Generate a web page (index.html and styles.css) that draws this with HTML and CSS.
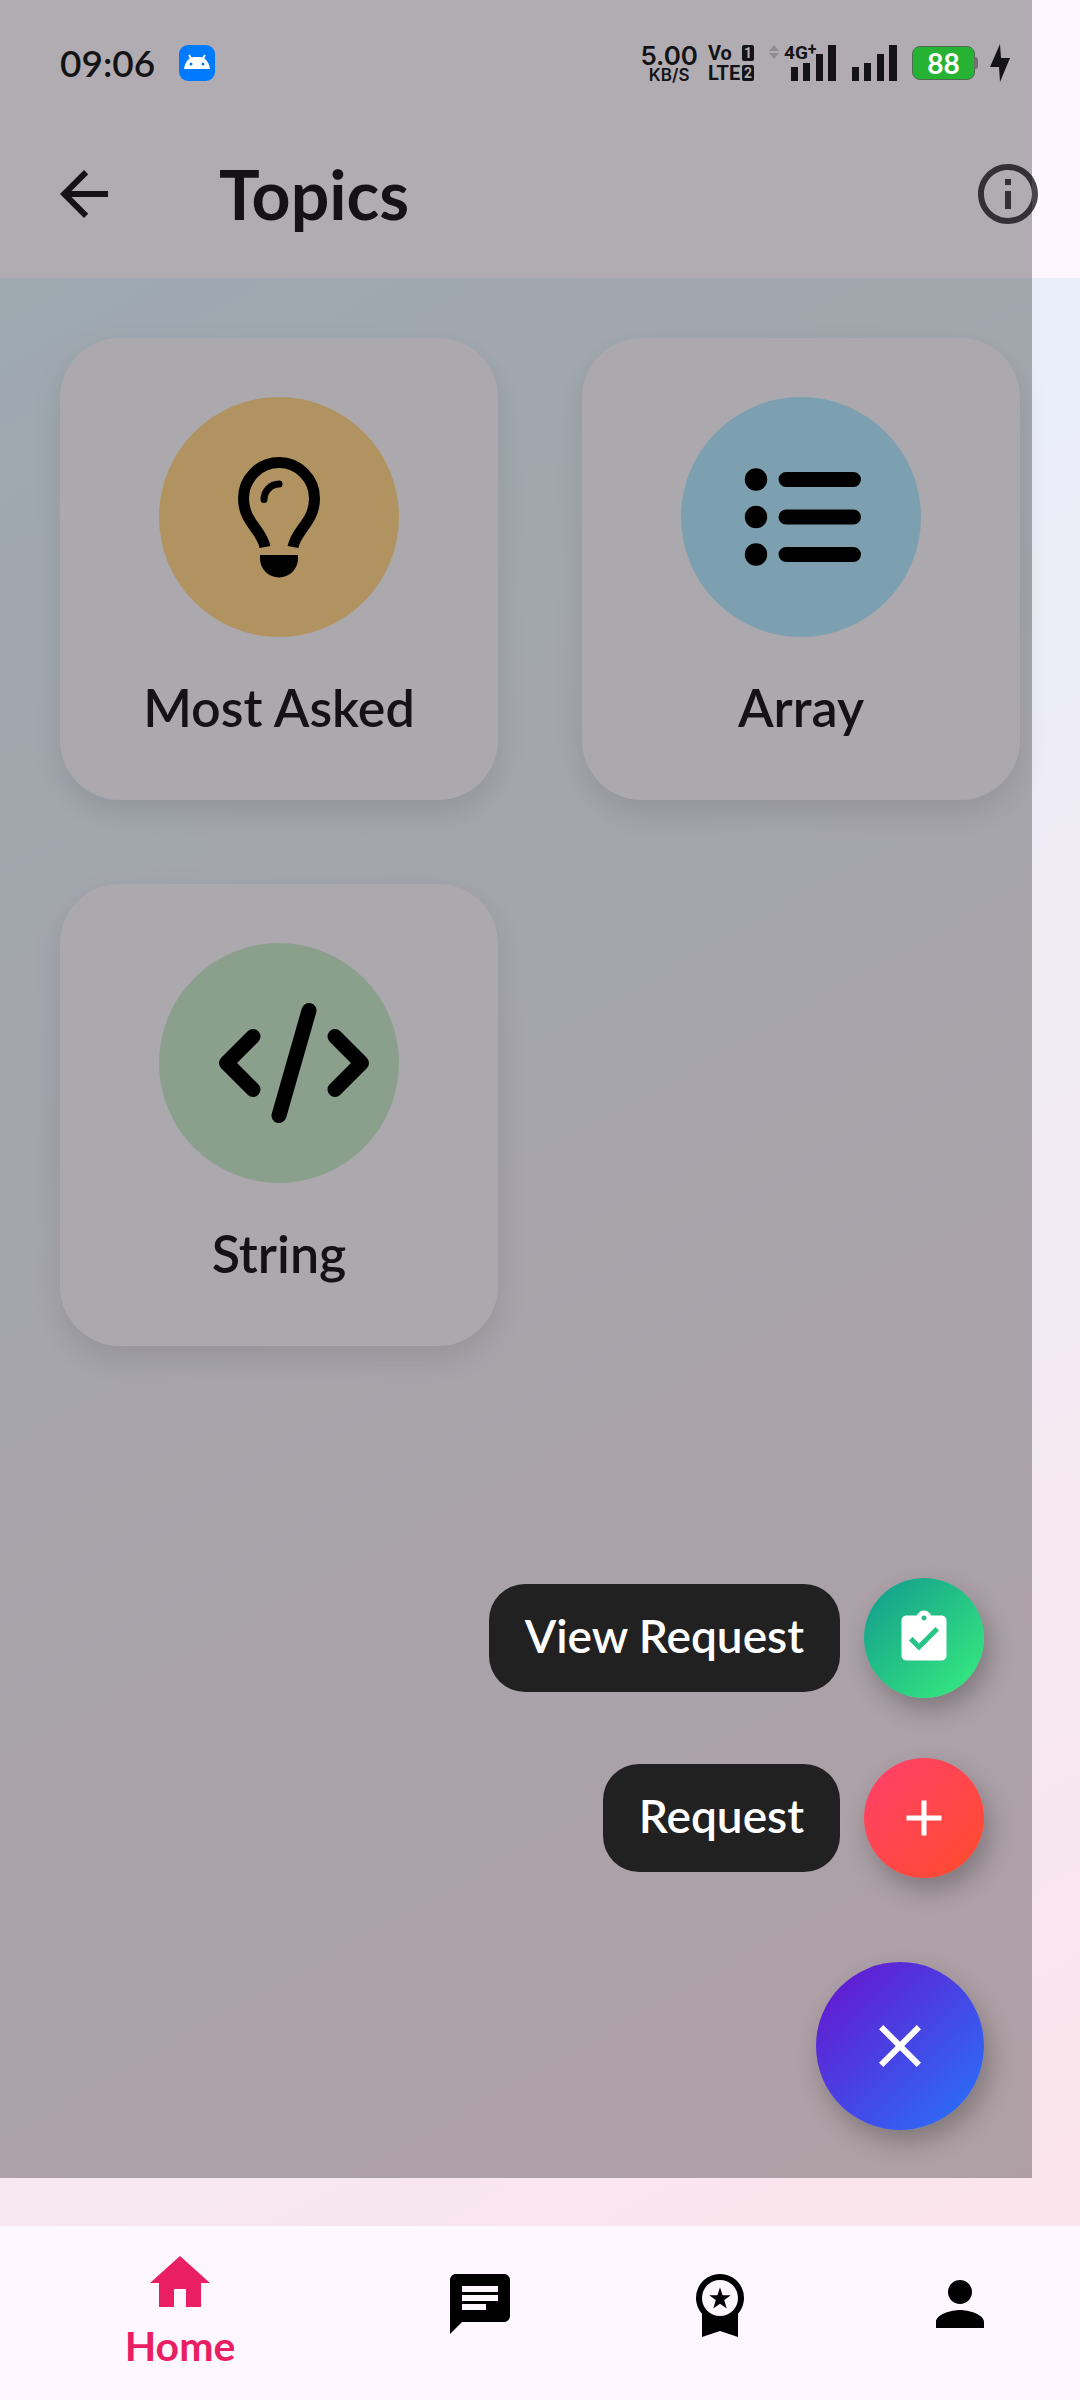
FILE: index.html
```html
<!DOCTYPE html>
<html lang="en">
<head>
<meta charset="utf-8">
<meta name="viewport" content="width=device-width, initial-scale=1">
<title>Topics</title>
<link rel="stylesheet" href="styles.css">
</head>
<body>
<div class="screen">
  <div class="status">
    <span class="clock">09:06</span>
    <svg class="droid" viewBox="0 0 36 36" aria-hidden="true">
      <rect width="36" height="36" rx="9" fill="#007aff"/>
      <path d="M10 10l3 5M26 10l-3 5" stroke="#fff" stroke-width="2"/>
      <path d="M5 24c1-8 6-12 10-12h6c4 0 9 4 10 12z" fill="#fff"/>
      <circle cx="12" cy="19" r="1.5" fill="#007aff"/><circle cx="24" cy="19" r="1.5" fill="#007aff"/>
    </svg>
    <div class="indicators">
      <div class="carrier">
        <div class="speed"><span class="rate">5.00</span><span class="unit">KB/S</span></div>
        <div class="volte">
          <span class="volte-row">Vo<span class="sim">1</span></span>
          <span class="volte-row">LTE<span class="sim">2</span></span>
        </div>
      </div>
      <div class="signal">
        <svg class="updown" viewBox="0 0 10 14" aria-hidden="true"><path d="M0 6l5-6 5 6zM0 8h10l-5 6z" fill="#8f8b90"/></svg>
        <svg class="bars" viewBox="0 0 46 36" aria-hidden="true"><path d="M1 22h7v14H1zM13 18h7v18h-7zM26 9h7v27h-7zM38 0h8v36h-8z"/></svg>
        <span class="network">4G<span class="plus">+</span></span>
      </div>
      <svg class="bars" viewBox="0 0 46 36" aria-hidden="true"><path d="M1 22h7v14H1zM13 18h7v18h-7zM26 9h7v27h-7zM38 0h8v36h-8z"/></svg>
      <div class="battery">88</div>
      <svg class="bolt" viewBox="0 0 20 38" aria-hidden="true"><path d="M10 0L0 23h9l1 15L20 14h-9z"/></svg>
    </div>
  </div>

  <header class="appbar">
    <button class="icon-button" aria-label="Back"><svg class="icon" viewBox="0 0 24 24"><path d="M20 11H7.83l5.59-5.59L12 4l-8 8 8 8 1.41-1.41L7.83 13H20z"/></svg></button>
    <h1 class="title">Topics</h1>
    <button class="icon-button info" aria-label="Information"><svg class="icon" viewBox="0 0 24 24"><path d="M11 7h2v2h-2zm0 4h2v6h-2zm1-9C6.48 2 2 6.48 2 12s4.480 10 10 10 10-4.480 10-10S17.520 2 12 2zm0 18c-4.410 0-8-3.590-8-8s3.590-8 8-8 8 3.590 8 8-3.590 8-8 8z"/></svg></button>
  </header>

  <main class="topics">
    <a class="card" href="#most-asked">
      <span class="disc amber"><svg class="glyph" viewBox="0 0 120 120" aria-hidden="true">
        <path d="M46 90C43 73 24.500 65 24.500 41.500a35.500 36 0 0 1 71 0C95.500 65 77 73 74 90" fill="none" stroke="#000" stroke-width="11"/>
        <path d="M45 42.500a15.500 15.500 0 0 1 15-15.500" fill="none" stroke="#000" stroke-width="7" stroke-linecap="round"/>
        <path d="M41 98h38v3.500a19 19 0 0 1-38 0z"/>
      </svg></span>
      <span class="card-label">Most Asked</span>
    </a>
    <a class="card" href="#array">
      <span class="disc blue"><svg class="glyph" viewBox="0 0 120 120" aria-hidden="true">
        <circle cx="15" cy="22.500" r="11.200"/><circle cx="15" cy="60" r="11.200"/><circle cx="15" cy="97.500" r="11.200"/>
        <path d="M45 22.500h67.500M45 60h67.500M45 97.500h67.500" stroke="#000" stroke-width="15" stroke-linecap="round"/>
      </svg></span>
      <span class="card-label">Array</span>
    </a>
    <a class="card" href="#string">
      <span class="disc green"><svg class="glyph" viewBox="0 0 120 120" aria-hidden="true">
        <path d="M34 33.500L7.500 60 34 86.500M116 33.500L142.500 60 116 86.500M90 7.500l-30 105" fill="none" stroke="#000" stroke-width="15" stroke-linecap="round" stroke-linejoin="round"/>
      </svg></span>
      <span class="card-label">String</span>
    </a>
  </main>

  <div class="scrim">
    <div class="action">
      <span class="action-label" id="view-request">View Request</span>
      <button class="fab small teal" aria-labelledby="view-request"><svg viewBox="0 0 24 24"><path d="M19 3h-4.180C14.400 1.840 13.300 1 12 1s-2.400.84-2.820 2H5c-1.100 0-2 .9-2 2v14c0 1.100.9 2 2 2h14c1.100 0 2-.9 2-2V5c0-1.100-.9-2-2-2zm-7 0c.55 0 1 .45 1 1s-.45 1-1 1-1-.45-1-1 .45-1 1-1zm-2 14l-4-4 1.410-1.410L10 14.170l6.590-6.590L18 9z"/></svg></button>
    </div>
    <div class="action">
      <span class="action-label" id="request">Request</span>
      <button class="fab small coral" aria-labelledby="request"><svg viewBox="0 0 24 24"><path d="M19 13h-6v6h-2v-6H5v-2h6V5h2v6h6z"/></svg></button>
    </div>
    <button class="fab large" aria-label="Close menu"><svg viewBox="0 0 24 24"><path d="M19 6.410L17.590 5 12 10.590 6.410 5 5 6.410 10.590 12 5 17.590 6.410 19 12 13.410 17.590 19 19 17.590 13.410 12z"/></svg></button>
  </div>
</div>

<nav class="tabs">
  <a class="tab active" href="#home"><svg class="icon" viewBox="0 0 24 24" aria-hidden="true"><path d="M10 20v-6h4v6h5v-8h3L12 3 2 12h3v8z"/></svg><span class="tab-label">Home</span></a>
  <a class="tab" href="#chat" aria-label="Chat"><svg class="icon" viewBox="0 0 24 24"><path d="M20 2H4c-1.100 0-2 .9-2 2v18l4-4h14c1.100 0 2-.9 2-2V4c0-1.100-.9-2-2-2zM6 6h12v2H6zm8 8H6v-2h8zm4-3H6V9h12z"/></svg></a>
  <a class="tab" href="#rewards" aria-label="Rewards"><svg class="icon" viewBox="0 0 24 24"><path fill-rule="evenodd" d="M12 2a8 8 0 0 0-6 13.290V23l6-2 6 2v-7.710A8 8 0 0 0 12 2zm0 2a6 6 0 1 1 0 12 6 6 0 0 1 0-12z"/><path d="M12 6.400l.85 2.650h2.750l-2.200 1.650.85 2.800L12 11.900l-2.250 1.600.85-2.800-2.200-1.650h2.750z"/></svg></a>
  <a class="tab" href="#profile" aria-label="Profile"><svg class="icon" viewBox="0 0 24 24"><path d="M12 12c2.210 0 4-1.790 4-4s-1.790-4-4-4-4 1.790-4 4 1.790 4 4 4zm0 2c-2.670 0-8 1.340-8 4v2h16v-2c0-2.660-5.330-4-8-4z"/></svg></a>
</nav>
</body>
</html>
```

FILE: styles.css
```css
* { box-sizing: border-box; }

body {
  margin: 0;
  min-height: 100vh;
  display: flex;
  flex-direction: column;
  background: #fef7ff;
  color: #1d1b20;
  font-family: Lato, "Open Sans", sans-serif;
}

a { color: inherit; text-decoration: none; }

button {
  border: 0;
  padding: 0;
  background: none;
  display: flex;
  align-items: center;
  justify-content: center;
}

svg { display: block; flex: none; }

.icon { width: 72px; height: 72px; fill: currentColor; }

.screen {
  position: relative;
  flex: 1;
  display: flex;
  flex-direction: column;
}

/* Status bar: stays above the dimming layer */
.status {
  position: relative;
  z-index: 2;
  height: 110px;
  padding: 16px 70px 0 60px;
  display: flex;
  align-items: center;
  gap: 24px;
  color: #141416;
}

.clock { font-size: 37px; line-height: 40px; font-weight: 600; }
.droid { width: 36px; height: 36px; }

.indicators {
  margin-left: auto;
  display: flex;
  align-items: center;
  gap: 15px;
  font-family: Roboto, sans-serif;
  font-weight: 700;
}
.carrier { display: flex; align-items: center; gap: 10px; }

.speed {
  display: flex;
  flex-direction: column;
  align-items: center;
  font-family: Inter, sans-serif;
  font-weight: 600;
}
.rate { font-size: 26px; line-height: 23px; }
.unit { font-size: 17px; line-height: 16px; }

.volte { width: 46px; display: flex; flex-direction: column; gap: 2px; }
.volte-row {
  display: flex;
  justify-content: space-between;
  align-items: center;
  font-size: 20px;
  line-height: 18px;
}
.sim {
  width: 12px;
  border-radius: 2px;
  background: #141416;
  color: #b2adb3;
  font-size: 14px;
  line-height: 16px;
  text-align: center;
}

.signal { position: relative; display: flex; gap: 11px; }
.network { position: absolute; left: 15px; top: 0; font-size: 19px; line-height: 16px; }
.plus { font-size: 16px; line-height: 0; vertical-align: 4px; }
.updown { width: 10px; height: 14px; }
.bars { width: 46px; height: 36px; fill: #141416; }

.battery {
  position: relative;
  width: 63px;
  height: 34px;
  border: 1px solid #4d6b50;
  border-radius: 8px;
  background: #26b232;
  color: #fff;
  font-family: Lato, sans-serif;
  font-size: 28px;
  line-height: 32px;
  text-align: center;
}
.battery::after {
  content: "";
  position: absolute;
  left: 100%;
  top: 10px;
  width: 4px;
  height: 12px;
  border-radius: 0 3px 3px 0;
  background: #716d72;
}
.bolt { width: 20px; height: 38px; fill: #141416; }

.appbar {
  height: 168px;
  padding: 0 36px 0 48px;
  display: flex;
  align-items: center;
}
.icon-button { color: inherit; }
.title { margin: 0 auto 0 99px; font-size: 68px; line-height: 72px; font-weight: 700; }
.info { color: #49454f; }

.topics {
  flex: 1;
  padding: 60px;
  display: grid;
  grid-template-columns: 1fr 1fr;
  align-content: start;
  gap: 84px;
  background: linear-gradient(151deg, #e3f2fd, #fce4ec);
}

.card {
  height: 462px;
  padding-top: 59px;
  display: flex;
  flex-direction: column;
  align-items: center;
  gap: 40px;
  border-radius: 60px;
  background: #f7f2fa;
  box-shadow: 0 12px 30px rgba(0, 0, 0, .1);
}
.disc { width: 240px; height: 240px; padding: 60px; border-radius: 50%; }
.glyph { width: 120px; height: 120px; overflow: visible; }
.amber { background: #fdd38c; }
.blue { background: #b3e5fc; }
.green { background: #c8e6c9; }
.card-label { font-size: 52px; line-height: 60px; font-weight: 600; }

/* Dimming layer with the expanded action menu */
.scrim {
  position: absolute;
  z-index: 1;
  inset: 0 48px 48px 0;
  padding: 48px;
  display: flex;
  flex-direction: column;
  align-items: flex-end;
  justify-content: flex-end;
  gap: 60px;
  background: rgba(0, 0, 0, .3);
}
.action { display: flex; align-items: center; gap: 24px; }
.action-label {
  padding: 22px 36px 26px;
  border-radius: 36px;
  background: #222122;
  color: #fff;
  font-size: 46px;
  line-height: 60px;
  font-weight: 600;
}
.fab { border-radius: 50%; box-shadow: 6px 12px 24px rgba(0, 0, 0, .25); }
.fab svg { fill: #fff; }
.small { width: 120px; height: 120px; }
.small svg { width: 60px; height: 60px; }
.teal { background: linear-gradient(135deg, #11998e, #38ef7d); }
.coral { background: linear-gradient(135deg, #ff416c, #ff4b2b); }
.large {
  width: 168px;
  height: 168px;
  margin-top: 24px;
  background: linear-gradient(135deg, #6a11cb, #2575fc);
}
.large svg { width: 72px; height: 72px; }

.tabs { display: flex; min-height: 174px; color: #000; }
.tab {
  flex: 2;
  padding-top: 42px;
  display: flex;
  flex-direction: column;
  align-items: center;
}
.active { flex: 3; padding-top: 21px; color: #e91e63; }
.tab-label { font-size: 41px; line-height: 54px; font-weight: 700; }
```
